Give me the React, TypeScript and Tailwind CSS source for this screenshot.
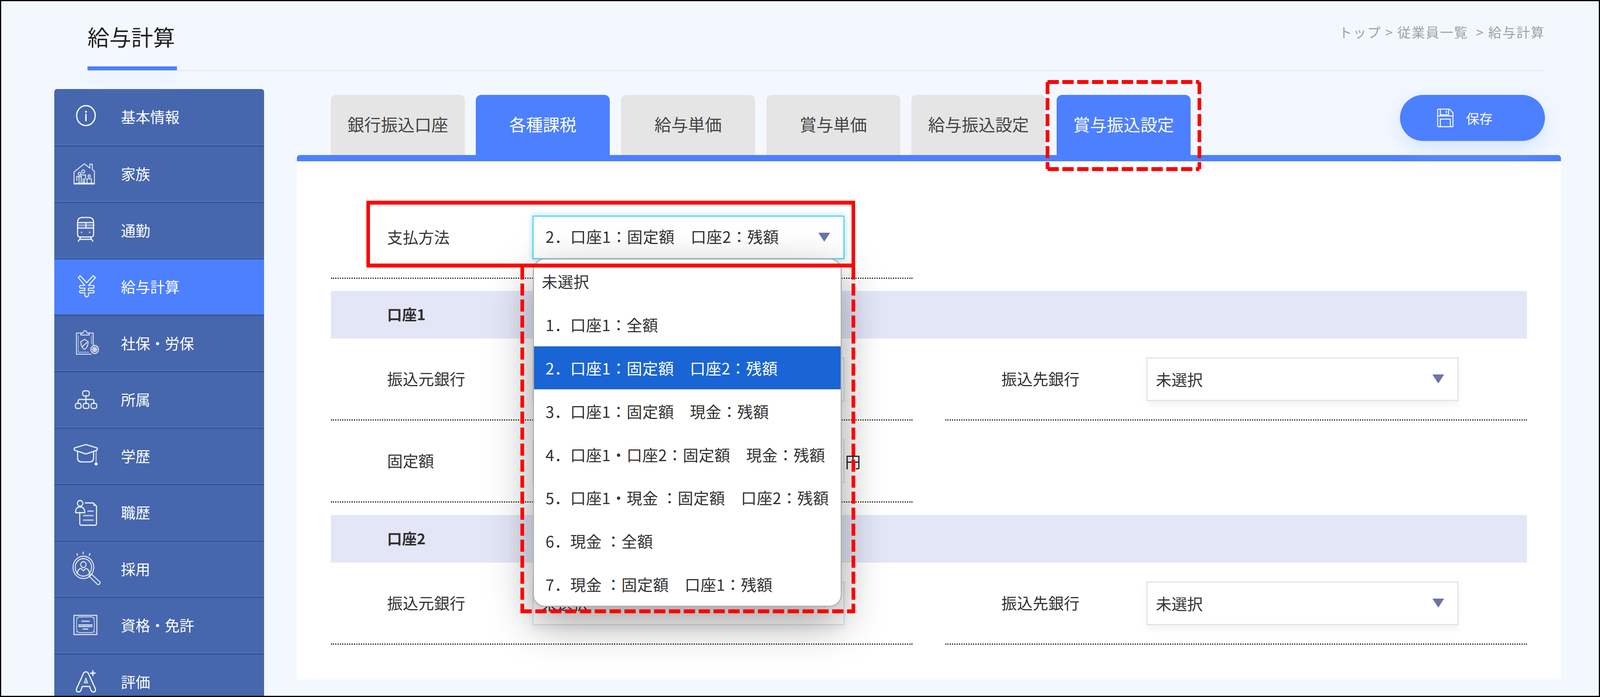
import React from "react";

const S = ({ children, o = 0.95, w = 3 }: { children: React.ReactNode; o?: number; w?: number }) => (
  <svg width="82" height="88" viewBox="0 0 88 88" preserveAspectRatio="none" fill="none" stroke="#fff" strokeWidth={w} strokeOpacity={o} strokeLinecap="round" strokeLinejoin="round" className="shrink-0 overflow-visible">
    {children}
  </svg>
);

const icons: Record<string, React.ReactNode> = {
  info: (
    <S w={3.5}>
      <circle cx="44" cy="44" r="25.5" />
      <circle cx="44" cy="34" r="2.6" fill="#fff" stroke="none" />
      <path d="M44 41V57" strokeWidth={4} />
    </S>
  ),
  family: (
    <S o={0.85} w={2.5}>
      <path d="M11.3 42.5L39.7 21.5L54.7 32.5V22.5H61.3V35.8L67.3 40.8V73.2H11.3Z" />
      <circle cx="36.5" cy="41" r="4" />
      <circle cx="26.5" cy="47" r="3.6" />
      <circle cx="53" cy="53" r="3.2" />
      <path d="M30 50H43V60M31 54V72M40 60V72M19 54H32M25 54V72M19 54V64M47 72V60H59V72M36 60V72" />
      <path d="M14 71H65" strokeWidth={2} />
    </S>
  ),
  train: (
    <S>
      <path d="M21 28Q21 15 34 15H52Q65 15 65 28V58Q65 65 58 65H28Q21 65 21 58Z" />
      <path d="M21 28H65M21 42H65M44 28V42" />
      <path d="M21 35H42M46 35H65" strokeWidth={6} strokeOpacity={0.4} />
      <circle cx="32" cy="53" r="1.8" fill="#fff" stroke="none" />
      <circle cx="54" cy="53" r="1.8" fill="#fff" stroke="none" />
      <path d="M30 65L23 76M56 65L63 76M27 71H59" />
    </S>
  ),
  yen: (
    <S w={2.6}>
      <path d="M23 24L28 19L46 37L64 19L70 24L51 44H65Q68 47 65 51H51V57H65Q68 60 65 63H51V70Q46 77 41 70V63H28Q25 60 28 57H41V51H28Q25 47 28 44H41Z" />
    </S>
  ),
  clip: (
    <S o={0.8} w={2.6}>
      <path d="M30 22H18V76H58M53 22H64V52" />
      <path d="M30 27H53V22H47Q46 16 41.5 16Q37 16 36 22H30Z" />
      <path d="M23 28V71H52M59 28V50" strokeWidth={1.5} />
      <path d="M40 38L50 44Q50 58 40 64Q30 58 30 44Z" />
      <path d="M35 56L47 46" />
      <circle cx="68" cy="64" r="10.5" />
      <circle cx="68" cy="64" r="5" />
      <path d="M68 55V73M59 64H77M62 58L74 70M74 58L62 70" strokeWidth={1.5} />
    </S>
  ),
  org: (
    <S o={0.9} w={3}>
      <rect x="35" y="25" width="18" height="13" rx="5" />
      <rect x="15" y="57" width="15.5" height="13" rx="4.5" />
      <rect x="36.5" y="57" width="15.5" height="13" rx="4.5" />
      <rect x="58" y="57" width="15.5" height="13" rx="4.5" />
      <path d="M44 38V57M22.5 57V52Q22.5 47 27 47H61Q66 47 66 52V57" />
    </S>
  ),
  cap: (
    <S o={0.88} w={3.2}>
      <path d="M13 27L42 19Q44 18 46 19L74 27Q77 30 74 33L46 42Q44 43 42 42L13 33Q10 30 13 27Z" />
      <path d="M21 37V53Q21 63 33 63H53Q65 63 65 53V37" />
      <path d="M72 33V62" strokeWidth={2} />
      <circle cx="72" cy="68" r="4" fill="#fff" stroke="none" />
    </S>
  ),
  job: (
    <S o={0.95} w={2.8}>
      <circle cx="28" cy="24" r="7.5" />
      <path d="M16 48Q14 34 28 33Q41 34 41 48Z" />
      <path d="M42 23H64L73 31V76Q73 80 69 80H31Q27 80 27 76V49" />
      <path d="M65 23V30H73" strokeWidth={1.6} />
      <path d="M48 44H65M36 55.5H65M36 67H65" strokeOpacity={0.65} strokeWidth={3.6} strokeLinecap="butt" />
    </S>
  ),
  hire: (
    <S o={0.8} w={2.8}>
      <circle cx="37" cy="44" r="28.5" />
      <circle cx="37" cy="44" r="22.5" />
      <circle cx="37" cy="37" r="7.5" />
      <path d="M20 60Q22 47 31 47L37 53L43 47Q52 47 54 60" />
      <path d="M52 66L59 61L83 82Q84 84 82 86L79 88Q77 89 75 87Z" />
      <path d="M20 9V13M36.5 5V9M55 9L53 13" strokeWidth={3.2} />
    </S>
  ),
  cert: (
    <S o={0.78} w={3}>
      <path d="M11 22H74V71H11Z" />
      <path d="M18 28Q22 30 24 26H62Q64 30 68 28Q64 31 67 34V58Q64 62 68 65Q64 63 62 66H24Q22 62 18 65Q22 62 18 58V34Q22 31 18 28Z" strokeWidth={1.8} />
      <path d="M33 37H53M24 46.5H61M24 50.5H61M36 57H49" />
    </S>
  ),
  a: (
    <S w={3}>
      <path d="M38 25Q44 20 50 25L70 66Q72 74 64 74Q60 74 58 70L54 60H34L30 70Q28 74 24 74Q16 74 18 66Z" />
      <path d="M44 38L49 51H39Z" fill="#fff" fillOpacity={0.45} strokeWidth={1.6} />
      <path d="M63 20V32M57 26H69" strokeWidth={3.4} />
    </S>
  ),
};

const navItems = [
  ["info", "基本情報"],
  ["family", "家族"],
  ["train", "通勤"],
  ["yen", "給与計算"],
  ["clip", "社保・労保"],
  ["org", "所属"],
  ["cap", "学歴"],
  ["job", "職歴"],
  ["hire", "採用"],
  ["cert", "資格・免許"],
  ["a", "評価"],
];

const tabs = ["銀行振込口座", "各種課税", "給与単価", "賞与単価", "給与振込設定", "賞与振込設定"];
const activeTabs = ["各種課税", "賞与振込設定"];

const options = [
  "未選択",
  "1．口座1：全額",
  "2．口座1：固定額　口座2：残額",
  "3．口座1：固定額　現金：残額",
  "4．口座1・口座2：固定額　現金：残額",
  "5．口座1・現金 ：固定額　口座2：残額",
  "6．現金 ：全額",
  "7．現金 ：固定額　口座1：残額",
];

const Arrow = () => (
  <svg width="30" height="23" viewBox="0 0 30 23" className="shrink-0">
    <polygon points="0,0 30,0 15,23" fill="#6b74a6" />
  </svg>
);

const Select = ({ text, focus = false }: { text: string; focus?: boolean }) => (
  <div
    className={
      focus
        ? "flex h-[112px] w-[799px] shrink-0 items-center justify-between border-[3px] border-[#5cd2f0] bg-white pl-[31px] pr-[34px] tracking-[0.7px] shadow-[0_0_14px_#8fe0f7]"
        : "flex h-[112px] w-[799px] shrink-0 items-center justify-between border-[3px] border-[#e4e4e4] bg-white pl-[21px] pr-[34px] shadow-[0_10px_16px_rgba(0,0,0,0.05)]"
    }
  >
    <span className={focus ? "whitespace-pre pb-[5px]" : "whitespace-pre"}>{text}</span>
    <Arrow />
  </div>
);

const Row = ({ label, children }: { label: string; children?: React.ReactNode }) => (
  <div className="flex h-[210px] items-center border-b-[3px] border-dotted border-[#222]">
    <div className="w-[515.5px] shrink-0 pb-[4px] pl-[144px]">{label}</div>
    {children}
  </div>
);

const Band = ({ text, top }: { text: string; top: string }) => (
  <div className={`${top} flex h-[122px] items-center bg-[#e3e6f6] pb-[6px] pl-[144px] text-[38px] font-bold`}>{text}</div>
);

export default function App() {
  return (
    <div
      lang="ja"
      className="relative h-screen w-screen overflow-hidden bg-[#f3f8ff] font-['Noto_Sans_CJK_JP',sans-serif] text-[40px] text-[#333]"
    >
      <header className="relative z-10 ml-[224px] mr-[141px] flex h-[182px] items-start justify-between border-b-2 border-[#e0e4ef]">
        <div className="w-[228.6px]">
          <div className="flex h-[170px] items-center pt-[16px] text-[56px] text-[#222]">給与計算</div>
          <div className="h-[10px] bg-[#4d80ff] shadow-[0_22px_40px_rgba(205,222,255,0.55)]" />
        </div>
        <div className="whitespace-pre pt-[56px] text-[34px] tracking-[2.3px] text-[#a0a0a0]">{"トップ > 従業員一覧  > 給与計算"}</div>
      </header>

      <div className="ml-[138.5px] mt-[46px] flex items-start">
        <nav className="w-[537px] shrink-0 overflow-hidden rounded-t-[7px] bg-[#4667ad] text-[37.5px] text-white">
          {navItems.map(([icon, label], i) => (
            <div
              key={label}
              className={`flex items-center border-b-[3px] border-[#35518f] pb-[8px] pl-[40px] shadow-[inset_0_-2px_0_#5478bd] ${
                i === 0 ? "h-[147px]" : "h-[144.5px]"
              } ${label === "給与計算" ? "bg-[#4d80ff]" : ""}`}
            >
              {icons[icon]}
              <span className="ml-[49px] mt-[5px]">{label}</span>
            </div>
          ))}
        </nav>

        <main className="ml-[84.5px] w-[3236px] shrink-0 pt-[15px]">
          <div className="relative z-10 flex h-[154px] items-start pl-[86.5px] pr-[41px]">
            <div className="flex gap-[28.4px]">
              {tabs.map((t) => (
                <div
                  key={t}
                  className={`flex h-[154px] w-[343.3px] items-center justify-center rounded-t-[14px] pb-[6px] text-[43px] ${
                    activeTabs.includes(t) ? "bg-[#4d80ff] text-white" : "bg-[#e5e5e5] text-[#444]"
                  }`}
                >
                  {t}
                </div>
              ))}
            </div>
            <button className="ml-auto flex h-[118px] w-[371px] items-center rounded-full bg-[#4d80ff] pl-[95px] text-[34px] text-white shadow-[0_16px_50px_rgba(190,212,255,0.6)]">
              <svg width="42" height="48" viewBox="0 0 46 48" preserveAspectRatio="none" fill="none" stroke="#fff" strokeWidth="2.6" className="shrink-0">
                <path d="M3 1.5H35L44.5 11V44Q44.5 46.5 42 46.5H4Q1.5 46.5 1.5 44V3Q1.5 1.5 3 1.5Z" />
                <path d="M9 1.5V16H32V1.5M26 5V12" />
                <path d="M1.5 19H44.5" />
                <path d="M9 46.5V27H37V46.5" />
              </svg>
              <span className="ml-[32px]">保存</span>
            </button>
          </div>

          <section className="relative h-[1343px] rounded-t-[8px] border-t-[16px] border-[#4d80ff] bg-white px-[87px] pt-[91px]">
            <div className="w-[1489px]">
              <Row label="支払方法">
                <Select text="2．口座1：固定額　口座2：残額" focus />
              </Row>
            </div>
            <Band text="口座1" top="mt-[31px]" />
            <div className="flex gap-[84px]">
              <div className="w-[1489px]">
                <Row label="振込元銀行">
                  <Select text="" />
                </Row>
              </div>
              <div className="w-[1490px]">
                <Row label="振込先銀行">
                  <Select text="未選択" />
                </Row>
              </div>
            </div>
            <div className="w-[1489px]">
              <Row label="固定額">
                <div className="h-[112px] w-[799px] shrink-0 border-[3px] border-[#e4e4e4] bg-white" />
                <span className="ml-[2px] text-[#222]">円</span>
              </Row>
            </div>
            <Band text="口座2" top="mt-[32px]" />
            <div className="flex gap-[84px]">
              <div className="w-[1489px]">
                <Row label="振込元銀行">
                  <Select text="未選択" />
                </Row>
              </div>
              <div className="w-[1490px]">
                <Row label="振込先銀行">
                  <Select text="未選択" />
                </Row>
              </div>
            </div>

            <div className="absolute left-[604px] top-[249px] w-[791px] overflow-hidden rounded-[30px] border-[3px] border-[#b4b4b4] bg-white tracking-[0.5px] shadow-[0_40px_110px_rgba(0,0,0,0.38)]">
              {options.map((o, i) => (
                <div
                  key={o}
                  className={`flex h-[110.8px] items-center whitespace-pre ${i === 0 ? "pl-[20px]" : "pl-[29.5px]"} ${
                    i === 2 ? "bg-[#1a65d6] text-white" : ""
                  }`}
                >
                  {o}
                </div>
              ))}
            </div>
          </section>
        </main>
      </div>

      <div className="absolute left-[937.6px] top-[514px] z-20 h-[171px] w-[1251.7px] border-x-[9px] border-y-[10px] border-[#ff0000]" />
      <svg width="4096" height="1785" viewBox="0 0 4096 1785" fill="none" stroke="#ff0000" className="absolute left-0 top-0 z-20">
        <path d="M2681.6 210H3070.4M2681.6 433H3070.4" strokeWidth="10" strokeDasharray="29 9" />
        <path d="M2681.6 210V433M3070.4 210V433" strokeWidth="9.3" strokeDasharray="31 10" />
        <path d="M1337 685V1565.5M2184.6 685V1565.5" strokeWidth="9.3" strokeDasharray="31 10" />
        <path d="M1332.4 1565.5H2189.2" strokeWidth="10" strokeDasharray="29 9" />
      </svg>

      <div className="absolute inset-0 z-30 border-[3px] border-black" />
    </div>
  );
}
